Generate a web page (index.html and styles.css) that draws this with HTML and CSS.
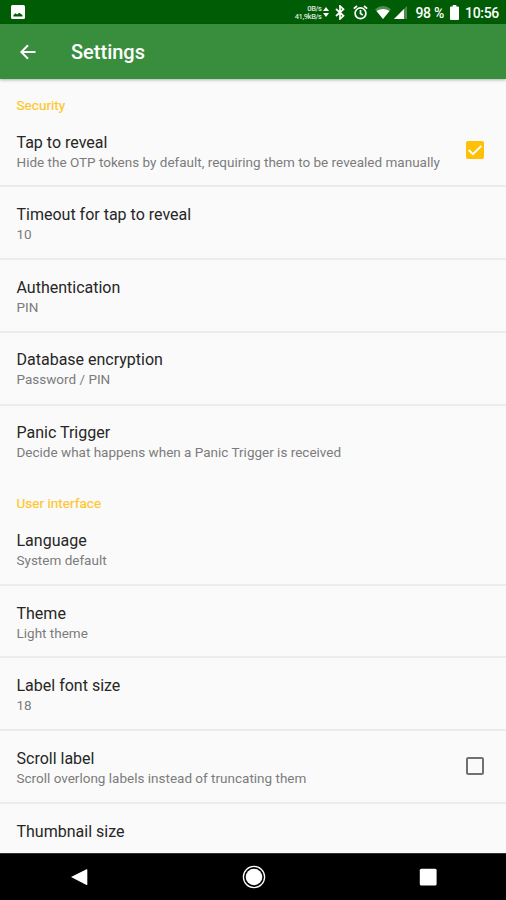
FILE: index.html
```html
<!DOCTYPE html>
<html lang="en">
<head>
<meta charset="utf-8">
<title>Settings</title>
<link rel="stylesheet" href="styles.css">
</head>
<body>
<div class="screen">
  <div class="status">
    <svg class="picture" width="14" height="14" viewBox="0 0 14 14"><rect width="14" height="14" rx="1.5" fill="#fff"/><path d="M2.500 11.500V10l2-1.800 1.700 1.300 2-1.800 3.300 2.300v1.500z" fill="#005c05"/></svg>
    <div class="tray">
      <div class="speed"><span>0B/s</span><span>41,9kB/s</span></div>
      <svg class="updown" width="6" height="12" viewBox="0 0 6 12"><path d="M0 5l3-4 3 4zM0 7h6l-3 4z" fill="#fff"/></svg>
      <svg class="bluetooth" width="10" height="15" viewBox="0 0 10 15"><path d="M1 4l7.500 6.800L5 14V1l3.500 3.200L1 11" fill="none" stroke="#fff" stroke-width="1.700"/></svg>
      <svg class="alarm" width="15" height="15" viewBox="0 0 15 15"><g fill="none" stroke="#fff" stroke-width="1.700"><circle cx="7.500" cy="8.300" r="5.400"/><path d="M7.500 5v3.500l2.300 1.600M.8 3.700L4 1M14.200 3.700L11 1"/></g></svg>
      <svg class="wifi" width="16" height="13" viewBox="0 0 16 13"><path d="M0 3.200Q8-3 16 3.200L8 13z" fill="#fff" opacity=".3"/><path d="M1.500 5Q8 .8 14.500 5L8 13z" fill="#fff"/></svg>
      <svg class="signal" width="13" height="13" viewBox="0 0 13 13"><path d="M0 13L13 0v13z" fill="#fff" opacity=".3"/><path d="M0 13L10 3v10z" fill="#fff"/></svg>
      <span class="percent">98 %</span>
      <svg class="battery" width="9" height="15" viewBox="0 0 9 15"><path d="M2.700 0h3.600v1.500H8q1 0 1 1V14q0 1-1 1H1q-1 0-1-1V2.500q0-1 1-1h1.700z" fill="#fff"/></svg>
      <span class="clock">10:56</span>
    </div>
  </div>
  <header class="appbar">
    <svg class="back" width="16" height="16" viewBox="0 0 16 16"><path d="M15.500 8H1.500M8 1.200L1.300 8 8 14.800" fill="none" stroke="#fff" stroke-width="2"/></svg>
    <h1>Settings</h1>
  </header>
  <main class="list">
    <section>
      <h2>Security</h2>
      <div class="row"><div class="text"><div class="title">Tap to reveal</div><div class="sub">Hide the OTP tokens by default, requiring them to be revealed manually</div></div>
        <svg class="check" width="18" height="18" viewBox="0 0 18 18"><rect width="18" height="18" rx="2" fill="#fec107"/><path d="M2.700 9l4.300 4.200 8.300-8.300" fill="none" stroke="#fff" stroke-width="2"/></svg></div>
      <div class="row"><div class="text"><div class="title">Timeout for tap to reveal</div><div class="sub">10</div></div></div>
      <div class="row"><div class="text"><div class="title">Authentication</div><div class="sub">PIN</div></div></div>
      <div class="row"><div class="text"><div class="title">Database encryption</div><div class="sub">Password / PIN</div></div></div>
      <div class="row"><div class="text"><div class="title">Panic Trigger</div><div class="sub">Decide what happens when a Panic Trigger is received</div></div></div>
    </section>
    <section>
      <h2>User interface</h2>
      <div class="row"><div class="text"><div class="title">Language</div><div class="sub">System default</div></div></div>
      <div class="row"><div class="text"><div class="title">Theme</div><div class="sub">Light theme</div></div></div>
      <div class="row"><div class="text"><div class="title">Label font size</div><div class="sub">18</div></div></div>
      <div class="row"><div class="text"><div class="title">Scroll label</div><div class="sub">Scroll overlong labels instead of truncating them</div></div>
        <svg class="check" width="18" height="18" viewBox="0 0 18 18"><rect x="1" y="1" width="16" height="16" rx="1.200" fill="none" stroke="#707070" stroke-width="2"/></svg></div>
      <div class="row"><div class="text"><div class="title">Thumbnail size</div></div></div>
    </section>
  </main>
  <nav class="navbar">
    <svg width="24" height="24" viewBox="0 0 24 24"><path d="M4 12L19.500 4.200q.8-.2.800.6v14.600q0 .8-.8.500z" fill="#fff"/></svg>
    <svg width="24" height="24" viewBox="0 0 24 24"><circle cx="12" cy="12" r="10.600" fill="none" stroke="#fff" stroke-width="1.300"/><circle cx="12" cy="12" r="8.300" fill="#fff"/></svg>
    <svg width="24" height="24" viewBox="0 0 24 24"><rect x="3.800" y="3.800" width="16.800" height="16.800" rx="1.500" fill="#fff"/></svg>
  </nav>
</div>
</body>
</html>
```

FILE: styles.css
```css
* { box-sizing: border-box; }
body { margin: 0; font-family: Roboto, "Liberation Sans", sans-serif; }
.screen { width: 506px; height: 900px; display: flex; flex-direction: column; overflow: hidden; background: #fafafa; }
svg { display: block; flex: none; }
.status { height: 24px; flex: none; background: #005c05; color: #fff; display: flex; justify-content: space-between; align-items: center; padding: 0 7px 0 11px; }
.tray { display: flex; align-items: center; height: 24px; }
.speed { display: flex; flex-direction: column; align-items: flex-end; font-size: 7.5px; font-weight: 500; line-height: 8px; letter-spacing: -0.4px; padding-top: 1px; opacity: .85; }
.updown { margin-left: 2px; }
.bluetooth { margin-left: 6px; }
.alarm { margin-left: 8px; }
.wifi { margin-left: 7px; }
.signal { margin-left: 3px; }
.percent, .clock { font-size: 14px; font-weight: 500; line-height: 24px; padding-top: 1px; white-space: nowrap; letter-spacing: -0.3px; }
.percent { margin-left: 8px; }
.battery { margin-left: 6px; }
.clock { margin-left: 6px; }
.appbar { height: 55px; flex: none; background: #388e3c; color: #fff; display: flex; align-items: center; padding-left: 20px; box-shadow: 0 1px 3px rgba(0, 0, 0, .3); z-index: 1; }
.appbar h1 { margin: 1px 0 0 35px; font-size: 20px; font-weight: 500; line-height: 28px; }
.list { flex: 1; min-height: 0; overflow: hidden; }
h2 { margin: 0; height: 34.8px; padding: 17px 16.5px 0; font-size: 13.6px; font-weight: 400; line-height: 20px; color: #ffc72b; -webkit-text-stroke: .2px #ffc72b; }
section:first-child h2 { height: 33.8px; padding-top: 16px; }
.row { height: 72.7px; padding: 17.9px 22px 0 16.5px; display: flex; justify-content: space-between; align-items: flex-start; }
.row + .row { border-top: 2px solid #ececec; padding-top: 17.6px; }
section + section .row + .row { padding-top: 18px; }
h2 + .row { padding-top: 20.2px; }
.title { font-size: 16px; line-height: 20px; color: #262626; white-space: nowrap; }
.sub { font-size: 13.5px; line-height: 20px; margin-top: -1px; color: #7c7c7c; white-space: nowrap; }
.check { margin-top: 8px; }
.navbar { height: 47px; flex: none; background: #000; border-top: 1px solid #333; display: flex; justify-content: space-between; align-items: center; padding: 0 66px 0 67px; }
```
